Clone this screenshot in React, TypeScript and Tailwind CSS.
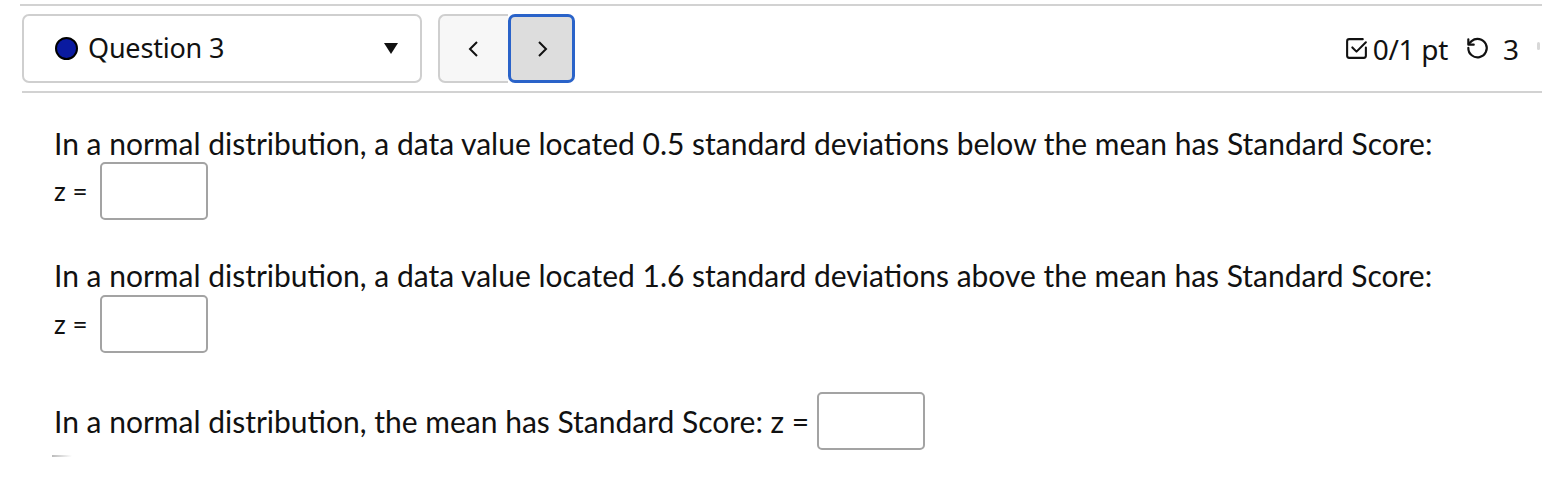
import React from "react"

function CheckSquareIcon() {
  return (
    <svg width="25" height="25" viewBox="0 0 24 24" fill="none" stroke="#111" strokeWidth="2" strokeLinecap="round" strokeLinejoin="round">
      <path d="M21 11v8a2 2 0 0 1-2 2H5a2 2 0 0 1-2-2V5a2 2 0 0 1 2-2h13" />
      <path d="m8 11 4 4 9-9" />
    </svg>
  )
}

function UndoIcon() {
  return (
    <svg width="26" height="26" viewBox="0 0 24 24" fill="none" stroke="#111" strokeWidth="2" strokeLinecap="round" strokeLinejoin="round">
      <path d="M4 11a8.5 8.5 0 1 0 3-6.3L4.5 7" />
      <path d="M4 3v5h5" />
    </svg>
  )
}

function AnswerBox() {
  return <div className="w-[108px] h-[58px] border-2 border-[#a3a3a3] rounded-[5px] bg-white" />
}

export default function App() {
  return (
    <div className="w-[1542px] h-[480px] bg-white overflow-hidden text-[#111] font-['Lato',sans-serif]">
      <div className="pl-[20px] pt-[4px]">
        <div className="h-[2px] bg-[#d2d2d2]" />

        {/* Header */}
        <div className="flex items-center h-[69px] mt-[8px] font-['Noto_Sans',sans-serif]">
          <div className="w-[400px] h-[69px] border-2 border-[#cfcfcf] rounded-[7px] flex items-center pl-[31px] pr-[22px] ml-[2px]">
            <div className="w-[23px] h-[23px] rounded-full bg-[#0a1aa0] border-[2.5px] border-black" />
            <span className="ml-[10px] text-[27px] tracking-[-0.2px]">Question 3</span>
            <svg className="ml-auto" width="14" height="11" viewBox="0 0 14 11">
              <path d="M0 0h14L7 11z" fill="#111" />
            </svg>
          </div>
          <div className="flex ml-[16px] h-[69px]">
            <div className="w-[70px] h-[69px] bg-[#f7f7f7] border-2 border-r-0 border-[#cfcfcf] rounded-l-[7px] flex items-center justify-center">
              <svg width="14" height="20" viewBox="0 0 14 20" fill="none" stroke="#111" strokeWidth="2">
                <path d="M10 3 3 10l7 7" />
              </svg>
            </div>
            <div className="w-[67px] h-[69px] bg-[#dddddd] border-[3px] border-[#2a63c9] rounded-[7px] flex items-center justify-center">
              <svg width="14" height="20" viewBox="0 0 14 20" fill="none" stroke="#111" strokeWidth="2">
                <path d="m4 3 7 7-7 7" />
              </svg>
            </div>
          </div>
          <div className="ml-auto flex items-center text-[28px] pr-[2px]">
            <CheckSquareIcon />
            <span className="ml-[4px] tracking-[-0.3px]">0/1 pt</span>
            <span className="ml-[16px]"><UndoIcon /></span>
            <span className="ml-[13px]">3</span>
            <span className="ml-[18px] w-[3px] h-[8px] bg-[#d8d8d8] rounded-full mb-[6px]" />
          </div>
        </div>

        <div className="h-[2px] bg-[#d2d2d2] mt-[8px] ml-[2px]" />

        {/* Body */}
        <div className="pl-[34px] pt-[32px] text-[30px] leading-[36px]">
          <p>In a normal distribution, a data value located 0.5 standard deviations below the mean has Standard Score:</p>
          <div className="flex items-center mt-[1px]">
            <span className="text-[26px]">z =</span>
            <span className="ml-[12px]"><AnswerBox /></span>
          </div>

          <p className="mt-[37px]">In a normal distribution, a data value located 1.6 standard deviations above the mean has Standard Score:</p>
          <div className="flex items-center mt-[2px]">
            <span className="text-[26px]">z =</span>
            <span className="ml-[12px]"><AnswerBox /></span>
          </div>

          <div className="flex items-center mt-[39px]">
            <span>In a normal distribution, the mean has Standard Score: z =</span>
            <span className="ml-[8px]"><AnswerBox /></span>
          </div>
          <div className="w-[20px] h-[2px] mt-[5px] -ml-[2px] bg-gradient-to-r from-[#bbb] to-white" />
        </div>
      </div>
    </div>
  )
}
